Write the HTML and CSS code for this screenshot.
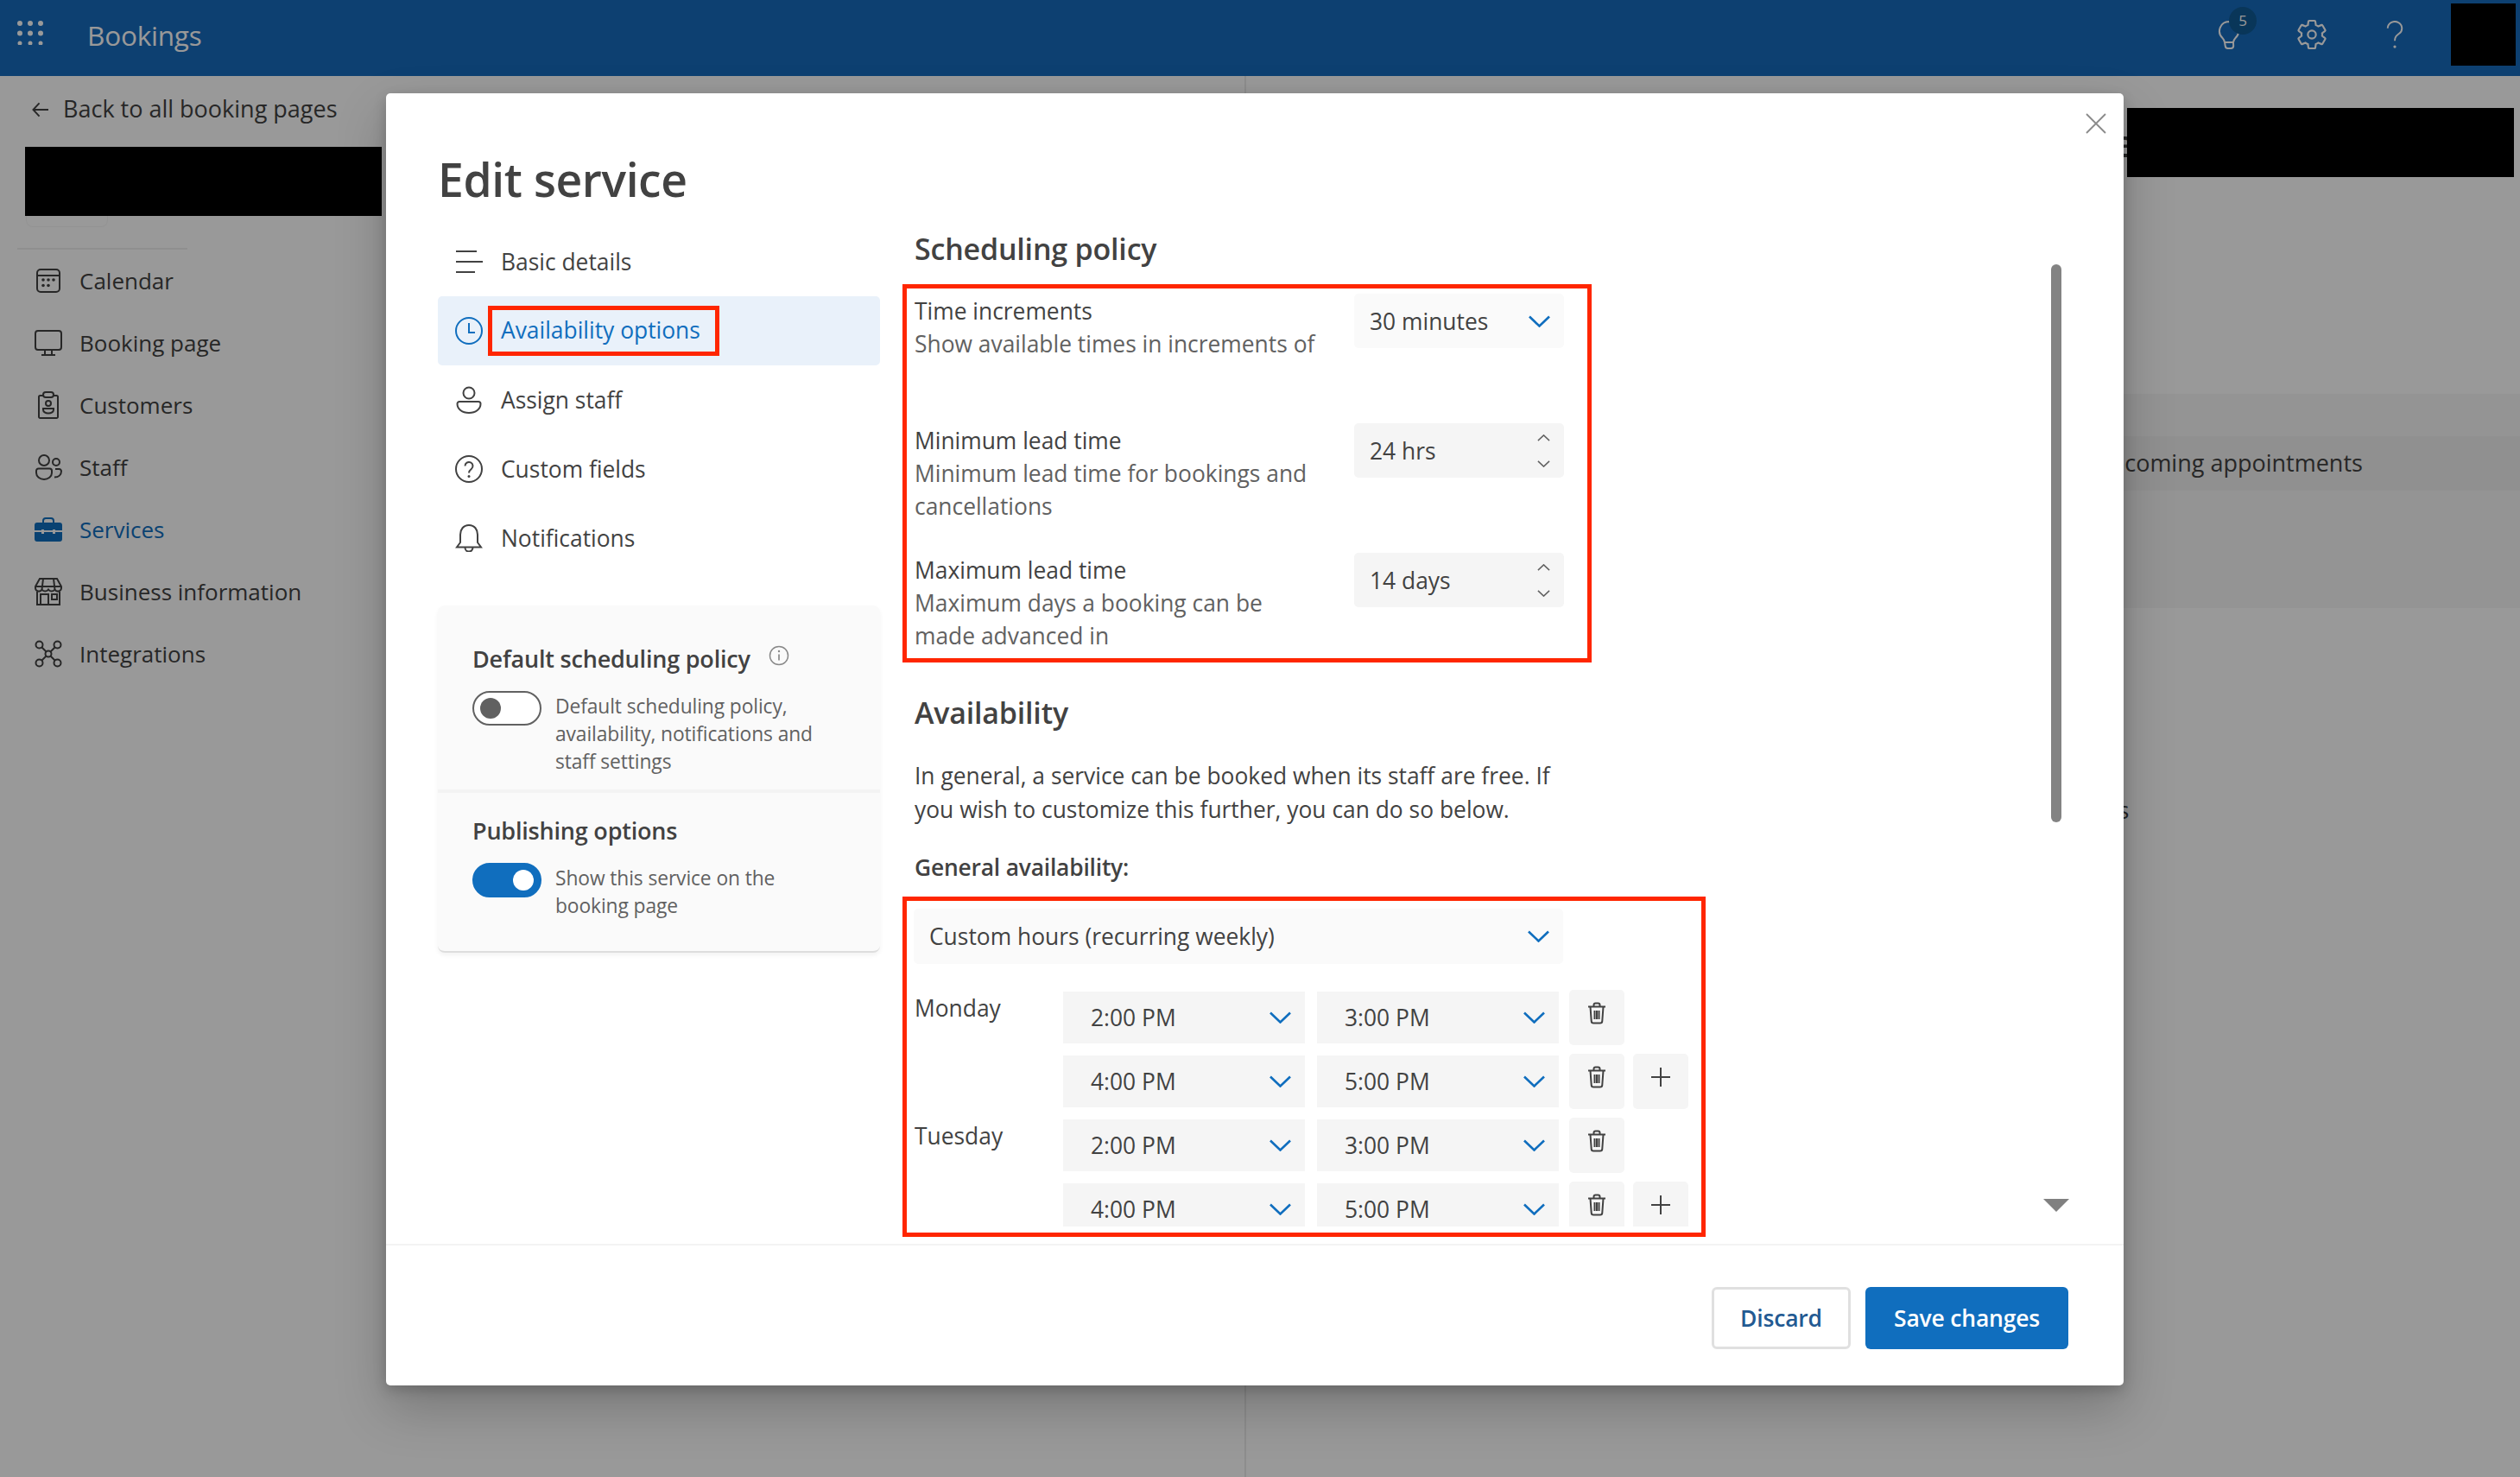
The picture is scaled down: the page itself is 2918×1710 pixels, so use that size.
FILE: index.html
```html
<!DOCTYPE html>
<html lang="en">
<head>
    <meta charset="UTF-8">
    <title>Edit service</title>
    <link rel="stylesheet" href="styles.css">
</head>
<body>
<svg class="defs" aria-hidden="true">
    <symbol id="chev" viewBox="0 0 25 14"><path d="M1 1.5 12.5 12.5 24 1.5" fill="none" stroke="currentColor" stroke-width="2.6"/></symbol>
    <symbol id="trash" viewBox="0 0 22 26"><g fill="none" stroke="currentColor" stroke-width="2"><path d="M1 5.5h20M7.5 5.5V3.5a2 2 0 0 1 2-2h3a2 2 0 0 1 2 2v2M3.5 5.5l1.2 16.5a2.5 2.5 0 0 0 2.5 2.5h7.6a2.5 2.5 0 0 0 2.5-2.5l1.2-16.5M8.5 10v10M11 10v10M13.5 10v10"/></g></symbol>
    <symbol id="plus" viewBox="0 0 22 22"><path d="M11 0v22M0 11h22" fill="none" stroke="currentColor" stroke-width="2"/></symbol>
</svg>

<!-- page behind the dialog -->
<header class="topbar">
    <svg class="waffle" viewBox="0 0 30 28"><g fill="currentColor"><circle cx="3" cy="3" r="3"/><circle cx="15" cy="3" r="3"/><circle cx="27" cy="3" r="3"/><circle cx="3" cy="14.500" r="3"/><circle cx="15" cy="14.500" r="3"/><circle cx="27" cy="14.500" r="3"/><circle cx="3" cy="26" r="2.500"/><circle cx="15" cy="26" r="2.500"/><circle cx="27" cy="26" r="2.500"/></g></svg>
    <span class="app-name">Bookings</span>
    <div class="top-icons">
        <div class="top-icon">
            <svg class="bulb" viewBox="0 0 26 34"><path d="M13 2a11 11 0 0 0-7.500 19c1.500 1.500 2 3 2.500 5l.8 4.500a3 3 0 0 0 3 2.500h3.400a3 3 0 0 0 3-2.500L18 26c.5-2 1-3.500 2.500-5A11 11 0 0 0 13 2ZM8 26h10" fill="none" stroke="currentColor" stroke-width="2"/></svg>
            <span class="badge">5</span>
        </div>
        <div class="top-icon">
            <svg class="gear" viewBox="0 0 24 24"><path d="M19.140 12.940c.04-.3.06-.61.06-.94 0-.32-.02-.64-.07-.94l2.030-1.580c.18-.14.23-.41.12-.61l-1.920-3.320c-.12-.22-.37-.29-.59-.22l-2.390.96c-.5-.38-1.030-.7-1.620-.94l-.36-2.540c-.04-.24-.24-.41-.48-.41h-3.840c-.24 0-.43.17-.47.41l-.36 2.540c-.59.24-1.130.57-1.620.94l-2.390-.96c-.22-.08-.47 0-.59.22L2.740 8.870c-.12.21-.08.47.12.61l2.030 1.580c-.05.3-.09.63-.09.94s.02.64.07.94l-2.030 1.580c-.18.14-.23.41-.12.61l1.920 3.320c.12.22.37.29.59.22l2.390-.96c.5.38 1.030.7 1.620.94l.36 2.540c.05.24.24.41.48.41h3.840c.24 0 .44-.17.47-.41l.36-2.540c.59-.24 1.130-.56 1.620-.94l2.390.96c.22.08.47 0 .59-.22l1.920-3.320c.12-.22.07-.47-.12-.61l-2.010-1.580Z" fill="none" stroke="currentColor" stroke-width="1.300"/><circle cx="12" cy="12" r="2.800" fill="none" stroke="currentColor" stroke-width="1.300"/></svg>
        </div>
        <div class="top-icon">
            <svg class="help" viewBox="0 0 20 34"><path d="M1.500 9a8.500 8 0 1 1 13.500 6.500c-3 2.300-5 3.800-5 8.500" fill="none" stroke="currentColor" stroke-width="2"/><circle cx="10" cy="31" r="1.700" fill="currentColor"/></svg>
        </div>
    </div>
    <div class="avatar"></div>
</header>

<div class="page">
    <aside class="sidebar">
        <div class="back-row">
            <svg class="back-arrow" viewBox="0 0 20 18"><path d="M9 1 1.500 9 9 17M2 9h18" fill="none" stroke="currentColor" stroke-width="2"/></svg>
            <span>Back to all booking pages</span>
        </div>
        <div class="redact redact-left"></div>
        <div class="page-btn"></div>
        <div class="side-line"></div>
        <nav class="side-nav">
            <a class="side-item">
                <svg viewBox="0 0 32 32"><g fill="none" stroke="currentColor" stroke-width="2"><rect x="3" y="3" width="26" height="26" rx="4"/><path d="M3 10h26"/></g><g fill="currentColor"><circle cx="10" cy="15" r="1.800"/><circle cx="16" cy="15" r="1.800"/><circle cx="22" cy="15" r="1.800"/><circle cx="10" cy="21.500" r="1.800"/><circle cx="16" cy="21.500" r="1.800"/></g></svg>
                <span>Calendar</span>
            </a>
            <a class="side-item">
                <svg viewBox="0 0 32 32"><g fill="none" stroke="currentColor" stroke-width="2"><rect x="1" y="2" width="30" height="22" rx="3"/><path d="M12 24v5M20 24v5M8 30h16"/></g></svg>
                <span>Booking page</span>
            </a>
            <a class="side-item">
                <svg viewBox="0 0 32 32"><g fill="none" stroke="currentColor" stroke-width="2"><path d="M10 5H6.500A1.500 1.500 0 0 0 5 6.500v23A1.500 1.500 0 0 0 6.500 31h19a1.500 1.500 0 0 0 1.500-1.500v-23A1.500 1.500 0 0 0 25.500 5H22"/><rect x="10" y="1" width="12" height="6" rx="3"/><circle cx="16" cy="14" r="3"/><path d="M10 20h12v1.500a6 4 0 0 1-12 0Z"/></g></svg>
                <span>Customers</span>
            </a>
            <a class="side-item">
                <svg viewBox="0 0 32 32"><g fill="none" stroke="currentColor" stroke-width="2"><circle cx="11" cy="8" r="6"/><circle cx="25" cy="10" r="4"/><path d="M2 20a2.500 2.500 0 0 1 2.500-2.500h13a2.500 2.500 0 0 1 2.500 2.500v2.500c0 4-4 7.500-9 7.500s-9-3.500-9-7.500Z"/><path d="M24 18h4.500a2.500 2.500 0 0 1 2.500 2.500c0 4-3 7-8 7"/></g></svg>
                <span>Staff</span>
            </a>
            <a class="side-item side-active">
                <svg viewBox="0 0 32 28"><path d="M10 7V4a3 3 0 0 1 3-3h6a3 3 0 0 1 3 3v3" fill="none" stroke="currentColor" stroke-width="2"/><path d="M3 6h26a3 3 0 0 1 3 3v6H24v-1h-3v1H11v-1H8v1H0V9a3 3 0 0 1 3-3ZM0 17h8v2h3v-2h10v2h3v-2h8v8a3 3 0 0 1-3 3H3a3 3 0 0 1-3-3Z" fill="currentColor"/></svg>
                <span>Services</span>
            </a>
            <a class="side-item">
                <svg viewBox="0 0 32 32"><g fill="none" stroke="currentColor" stroke-width="2"><path d="M6 1h20l5 9v2a4 4 0 0 1-7.500 1.500 4.500 4.500 0 0 1-7.500 0 4.500 4.500 0 0 1-7.500 0A4 4 0 0 1 1 12v-2ZM1 10h30M10 1 8.500 13.500M22 1l1.500 12.500"/><path d="M3 16v15h26V16M7 31V19h9v12M20 19h6v6h-6Z"/></g></svg>
                <span>Business information</span>
            </a>
            <a class="side-item">
                <svg viewBox="0 0 32 32"><g fill="none" stroke="currentColor" stroke-width="2"><circle cx="5.500" cy="5.500" r="4"/><circle cx="26.500" cy="5.500" r="4"/><circle cx="5.500" cy="26.500" r="4"/><circle cx="26.500" cy="26.500" r="4"/><circle cx="16" cy="16" r="3.500"/><path d="m8.500 8.500 5 5M23.500 8.500l-5 5M8.500 23.500l5-5M23.500 23.500l-5-5"/></g></svg>
                <span>Integrations</span>
            </a>
        </nav>
    </aside>
    <main class="center-pane"></main>
    <section class="right-pane">
        <div class="right-title">e</div>
        <div class="redact redact-right"></div>
        <div class="band">
            <div class="band-row">Upcoming appointments</div>
        </div>
        <div class="right-note">Services</div>
    </section>
</div>

<div class="backdrop"></div>

<!-- dialog -->
<div class="modal">
    <svg class="modal-close" viewBox="0 0 24 24"><path d="M1 1l22 22M23 1 1 23" fill="none" stroke="currentColor" stroke-width="1.800"/></svg>
    <div class="scroll-thumb"></div>
    <div class="scroll-down"></div>

    <div class="modal-body">
        <div class="left-col">
            <h1 class="modal-title">Edit service</h1>
            <ul class="menu">
                <li class="menu-item">
                    <svg viewBox="0 0 32 32"><path d="M1 4h24M1 16h32M1 28h22" fill="none" stroke="currentColor" stroke-width="2"/></svg>
                    <span>Basic details</span>
                </li>
                <li class="menu-item menu-active">
                    <svg viewBox="0 0 32 32"><circle cx="16" cy="16" r="15" fill="none" stroke="currentColor" stroke-width="2"/><path d="M16 7v11h7" fill="none" stroke="currentColor" stroke-width="2"/></svg>
                    <span class="menu-mark">Availability options</span>
                </li>
                <li class="menu-item">
                    <svg viewBox="0 0 32 32"><g fill="none" stroke="currentColor" stroke-width="2"><circle cx="16" cy="8" r="6.500"/><path d="M5 18h22a2.500 2.500 0 0 1 2.500 2.500c0 6-5.500 10.500-13.500 10.500S2.500 26.500 2.500 20.500A2.500 2.500 0 0 1 5 18Z"/></g></svg>
                    <span>Assign staff</span>
                </li>
                <li class="menu-item">
                    <svg viewBox="0 0 32 32"><circle cx="16" cy="16" r="15" fill="none" stroke="currentColor" stroke-width="2"/><path d="M11.500 12.500a4.500 4.500 0 1 1 7.300 3.500c-1.800 1.400-2.800 2.300-2.800 4.500" fill="none" stroke="currentColor" stroke-width="2"/><circle cx="16" cy="24.500" r="1.500" fill="currentColor"/></svg>
                    <span>Custom fields</span>
                </li>
                <li class="menu-item">
                    <svg viewBox="0 0 32 32"><path d="M16 1C9.500 1 6 6 6 12v9l-4 5.500h28L26 21v-9C26 6 22.500 1 16 1ZM11.500 27a4.500 4.500 0 0 0 9 0" fill="none" stroke="currentColor" stroke-width="2"/></svg>
                    <span>Notifications</span>
                </li>
            </ul>

            <div class="side-card">
                <div class="card-part card-first">
                    <h3 class="card-head">Default scheduling policy
                        <svg class="info" viewBox="0 0 24 24"><circle cx="12" cy="12" r="10.500" fill="none" stroke="currentColor" stroke-width="1.500"/><path d="M12 10.500v7" stroke="currentColor" stroke-width="1.700"/><circle cx="12" cy="7" r="1.200" fill="currentColor"/></svg>
                    </h3>
                    <div class="toggle-row">
                        <div class="toggle"><div class="knob"></div></div>
                        <p class="toggle-text">Default scheduling policy, availability, notifications and staff settings</p>
                    </div>
                </div>
                <div class="card-part">
                    <h3 class="card-head">Publishing options</h3>
                    <div class="toggle-row">
                        <div class="toggle toggle-on"><div class="knob"></div></div>
                        <p class="toggle-text">Show this service on the booking page</p>
                    </div>
                </div>
            </div>
        </div>

        <div class="right-col">
            <h2 class="section-head">Scheduling policy</h2>
            <div class="mark mark-policy">
                <div class="policy-row">
                    <div class="policy-text">
                        <div class="policy-label">Time increments</div>
                        <div class="policy-sub">Show available times in increments of</div>
                    </div>
                    <div class="field field-light">
                        <span>30 minutes</span>
                        <svg class="chev"><use href="#chev"/></svg>
                    </div>
                </div>
                <div class="policy-row">
                    <div class="policy-text">
                        <div class="policy-label">Minimum lead time</div>
                        <div class="policy-sub">Minimum lead time for bookings and cancellations</div>
                    </div>
                    <div class="field">
                        <span>24 hrs</span>
                        <div class="spin">
                            <svg class="spin-up"><use href="#chev"/></svg>
                            <svg><use href="#chev"/></svg>
                        </div>
                    </div>
                </div>
                <div class="policy-row policy-last">
                    <div class="policy-text">
                        <div class="policy-label">Maximum lead time</div>
                        <div class="policy-sub">Maximum days a booking can be made advanced in</div>
                    </div>
                    <div class="field">
                        <span>14 days</span>
                        <div class="spin">
                            <svg class="spin-up"><use href="#chev"/></svg>
                            <svg><use href="#chev"/></svg>
                        </div>
                    </div>
                </div>
            </div>

            <h2 class="section-head head-avail">Availability</h2>
            <p class="avail-text">In general, a service can be booked when its staff are free. If you wish to customize this further, you can do so below.</p>
            <div class="general-label">General availability:</div>

            <div class="mark mark-hours">
                <div class="hours-clip">
                    <div class="field field-light field-wide">
                        <span>Custom hours (recurring weekly)</span>
                        <svg class="chev"><use href="#chev"/></svg>
                    </div>
                    <div class="time-rows">
                        <div class="time-row">
                            <div class="day">Monday</div>
                            <div class="time"><span>2:00 PM</span><svg class="chev"><use href="#chev"/></svg></div>
                            <div class="time"><span>3:00 PM</span><svg class="chev"><use href="#chev"/></svg></div>
                            <div class="sq-btn"><svg class="ic-trash"><use href="#trash"/></svg></div>
                        </div>
                        <div class="time-row">
                            <div class="day"></div>
                            <div class="time"><span>4:00 PM</span><svg class="chev"><use href="#chev"/></svg></div>
                            <div class="time"><span>5:00 PM</span><svg class="chev"><use href="#chev"/></svg></div>
                            <div class="sq-btn"><svg class="ic-trash"><use href="#trash"/></svg></div>
                            <div class="sq-btn"><svg class="ic-plus"><use href="#plus"/></svg></div>
                        </div>
                        <div class="time-row">
                            <div class="day">Tuesday</div>
                            <div class="time"><span>2:00 PM</span><svg class="chev"><use href="#chev"/></svg></div>
                            <div class="time"><span>3:00 PM</span><svg class="chev"><use href="#chev"/></svg></div>
                            <div class="sq-btn"><svg class="ic-trash"><use href="#trash"/></svg></div>
                        </div>
                        <div class="time-row">
                            <div class="day"></div>
                            <div class="time"><span>4:00 PM</span><svg class="chev"><use href="#chev"/></svg></div>
                            <div class="time"><span>5:00 PM</span><svg class="chev"><use href="#chev"/></svg></div>
                            <div class="sq-btn"><svg class="ic-trash"><use href="#trash"/></svg></div>
                            <div class="sq-btn"><svg class="ic-plus"><use href="#plus"/></svg></div>
                        </div>
                    </div>
                </div>
            </div>
        </div>
    </div>

    <div class="modal-foot">
        <button class="btn btn-plain">Discard</button>
        <button class="btn btn-blue">Save changes</button>
    </div>
</div>
</body>
</html>
```

FILE: styles.css
```css
* {
    box-sizing: border-box;
}

html, body {
    margin: 0;
    height: 100%;
}

body {
    width: 2918px;
    height: 1710px;
    overflow: hidden;
    position: relative;
    background: #fff;
    font-family: "Open Sans", "Noto Sans", sans-serif;
    font-size: 26.400px;
    color: #424242;
}

.defs {
    display: none;
}

/* top bar */
.topbar {
    height: 88px;
    display: flex;
    align-items: center;
    padding-bottom: 8px;
    background: #176bbc;
    color: #fff;
}

.waffle {
    width: 30px;
    height: 28px;
    margin: -5px 0 0 20px;
}

.app-name {
    margin-left: 51px;
    font-size: 31.500px;
    letter-spacing: -0.2px;
}

.top-icons {
    margin-left: auto;
    display: flex;
}

.top-icon {
    width: 96px;
    height: 80px;
    display: flex;
    align-items: center;
    justify-content: center;
    position: relative;
}

.bulb {
    width: 26px;
    height: 34px;
}

.gear {
    width: 40px;
    height: 40px;
}

.help {
    width: 20px;
    height: 33px;
}

.badge {
    position: absolute;
    left: 48px;
    top: 8px;
    width: 32px;
    height: 32px;
    border-radius: 50%;
    background: #0f5a95;
    font-size: 17px;
    line-height: 31px;
    text-align: center;
}

.avatar {
    width: 75px;
    height: 72px;
    margin: 0 5px 0 17px;
    background: #000;
}

/* page behind */
.page {
    display: flex;
    height: 1622px;
}

.sidebar {
    width: 560px;
    padding-top: 20px;
    flex: none;
}

.back-row {
    display: flex;
    align-items: center;
    height: 34px;
    padding-left: 37px;
    gap: 17px;
    font-size: 27px;
}

.back-arrow {
    width: 19px;
    height: 18px;
    margin-top: 4px;
}

.redact {
    background: #000;
}

.redact-left {
    position: relative;
    z-index: 5;
    width: 413px;
    height: 80px;
    margin: 28px 0 0 29px;
}

.page-btn {
    width: 95px;
    height: 13px;
    margin-left: 30px;
    background: #ffffff;
    border: 1px solid #f5f5f5;
    border-top: none;
    border-radius: 0 0 8px 8px;
}

.side-line {
    width: 197px;
    height: 2px;
    margin: 24px 0 0 20px;
    background: #eeeeee;
}

.side-nav {
    display: flex;
    flex-direction: column;
}

.side-item {
    height: 72px;
    display: flex;
    align-items: center;
    gap: 20px;
    padding-left: 40px;
    font-size: 26px;
}

.side-item svg {
    width: 32px;
    height: 32px;
    flex: none;
}

.side-active {
    color: #106ebe;
}

.side-active svg {
    height: 28px;
}

.center-pane {
    width: 883px;
    flex: none;
    border-right: 2px solid #ececec;
}

.right-pane {
    flex: 1;
    position: relative;
    font-size: 27px;
}

.right-title {
    position: absolute;
    left: 1004px;
    top: 52px;
    font-size: 44px;
    font-weight: 600;
    line-height: 50px;
}

.redact-right {
    position: absolute;
    z-index: 5;
    left: 1020px;
    top: 37px;
    width: 448px;
    height: 80px;
}

.band {
    margin-top: 368px;
    height: 248px;
    padding-top: 49px;
    background: #f7f7f7;
}

.band-row {
    height: 63px;
    padding-left: 981px;
    line-height: 61px;
    background: #f0f0f0;
    white-space: nowrap;
}

.right-note {
    margin-top: 215px;
    padding-left: 920px;
}

.backdrop {
    position: absolute;
    inset: 0;
    background: rgba(0, 0, 0, 0.4);
}

/* dialog */
.modal {
    position: absolute;
    left: 447px;
    top: 108px;
    width: 2012px;
    height: 1496px;
    display: flex;
    flex-direction: column;
    background: #fff;
    border-radius: 5px;
    box-shadow: 0 26px 58px rgba(0, 0, 0, 0.22), 0 5px 15px rgba(0, 0, 0, 0.18);
}

.modal-close {
    position: absolute;
    left: 1968px;
    top: 23px;
    width: 24px;
    height: 24px;
    color: #8a8a8a;
}

.scroll-thumb {
    position: absolute;
    left: 1928px;
    top: 198px;
    width: 12px;
    height: 646px;
    border-radius: 6px;
    background: #838383;
}

.scroll-down {
    position: absolute;
    left: 1919px;
    top: 1280px;
    width: 0;
    height: 0;
    border-left: 15.500px solid transparent;
    border-right: 15.500px solid transparent;
    border-top: 15px solid #808080;
}

.modal-body {
    height: 1332px;
    flex: none;
    display: flex;
    overflow: hidden;
}

.left-col {
    width: 512px;
    margin-left: 60px;
    flex: none;
    padding-top: 64px;
}

.modal-title {
    margin: 0 0 19px 0;
    font-size: 53.400px;
    font-weight: 600;
    line-height: 72px;
    letter-spacing: -0.4px;
    color: #424242;
}

.menu {
    list-style: none;
    margin: 0;
    padding: 0;
}

.menu-item {
    height: 80px;
    display: flex;
    align-items: center;
    padding-left: 20px;
    gap: 21px;
    border-radius: 5px;
}

.menu-item svg {
    width: 32px;
    height: 32px;
    flex: none;
}

.menu-active {
    background: #e9f1fa;
    color: #106ebe;
}

.menu-mark {
    margin-left: -15px;
    height: 58px;
    padding: 0 17px 0 10px;
    border: 5px solid #ff2600;
    line-height: 46px;
}

.side-card {
    margin-top: 38px;
    background: #fafafa;
    border-radius: 8px;
    border-bottom: 2px solid #dddddd;
    box-shadow: 0 3px 5px rgba(0, 0, 0, 0.05);
    height: 402px;
}

.card-part {
    padding: 0 40px;
}

.card-first {
    height: 217px;
    padding-top: 44px;
    border-bottom: 4px solid #f3f3f3;
}

.card-part + .card-part {
    padding-top: 26px;
}

.card-head {
    margin: 0;
    font-size: 27px;
    font-weight: 600;
    line-height: 36px;
    display: flex;
    align-items: center;
    letter-spacing: -0.2px;
}

.info {
    width: 24px;
    height: 24px;
    margin: -8px 0 0 21px;
    color: #888888;
}

.toggle-row {
    display: flex;
    gap: 16px;
    margin-top: 19px;
}

.toggle {
    width: 80px;
    height: 40px;
    flex: none;
    display: flex;
    align-items: center;
    padding: 0 7px;
    border: 2px solid #616161;
    border-radius: 20px;
    background: #fff;
}

.knob {
    width: 24px;
    height: 24px;
    border-radius: 50%;
    background: #616161;
}

.toggle-on {
    justify-content: flex-end;
    background: #106ebe;
    border-color: #106ebe;
}

.toggle-on .knob {
    background: #fff;
}

.toggle-text {
    margin: 2px 0 0;
    width: 320px;
    font-size: 22.800px;
    line-height: 32px;
    color: #616161;
    letter-spacing: -0.1px;
}

.right-col {
    margin-left: 26px;
    width: 930px;
    flex: none;
    padding-top: 158px;
}

.section-head {
    margin: 0 0 19px 14px;
    font-size: 34px;
    font-weight: 600;
    line-height: 44px;
    letter-spacing: -0.2px;
}

.head-avail {
    margin-top: 36px;
    margin-bottom: 32px;
}

.mark {
    border: 5px solid #ff2600;
}

.mark-policy {
    width: 798px;
    height: 438px;
    padding: 6px 0 0 9px;
}

.policy-row {
    height: 150px;
    display: flex;
}

.policy-last {
    height: auto;
}

.policy-text {
    width: 509px;
    padding: 1px 42px 0 0;
    line-height: 38px;
}

.policy-sub {
    color: #616161;
}

.field {
    width: 243px;
    height: 63px;
    display: flex;
    align-items: center;
    justify-content: space-between;
    padding: 0 16px 0 18px;
    background: #f5f5f5;
    border-radius: 5px;
}

.field-light {
    background: #fafafa;
}

.field-wide {
    width: 752px;
    height: 64px;
    margin-left: 8px;
}

.chev {
    width: 25px;
    height: 14px;
    color: #106ebe;
    flex: none;
}

.spin {
    display: flex;
    flex-direction: column;
    gap: 22px;
    color: #616161;
}

.spin svg {
    display: block;
    width: 15px;
    height: 8px;
}

.spin-up {
    transform: scaleY(-1);
}

.avail-text {
    margin: 0 0 0 14px;
    width: 760px;
    line-height: 39px;
}

.general-label {
    margin: 28px 0 15px 14px;
    font-weight: 600;
    line-height: 38px;
    letter-spacing: -0.2px;
}

.mark-hours {
    height: 394px;
    padding-bottom: 7px;
}

.hours-clip {
    height: 377px;
    overflow: hidden;
    padding-top: 9px;
}

.time-rows {
    margin-top: 30px;
    padding-left: 9px;
    display: flex;
    flex-direction: column;
    gap: 10px;
}

.time-row {
    display: flex;
    align-items: center;
    height: 64px;
    flex: none;
}

.day {
    width: 172px;
    align-self: flex-start;
    margin-top: 2px;
    line-height: 38px;
}

.time {
    width: 280px;
    height: 60px;
    display: flex;
    align-items: center;
    justify-content: space-between;
    padding: 0 16px 0 32px;
    margin-right: 14px;
    background: #f5f5f5;
}

.sq-btn {
    width: 64px;
    height: 64px;
    margin-right: 10px;
    display: flex;
    justify-content: center;
    padding-top: 14px;
    background: #f5f5f5;
    border-radius: 5px;
    flex: none;
}

.time + .sq-btn {
    margin-left: -2px;
}

.ic-trash {
    width: 22px;
    height: 26px;
}

.ic-plus {
    width: 22px;
    height: 22px;
    margin-top: 2px;
}

.modal-foot {
    flex: 1;
    display: flex;
    justify-content: flex-end;
    gap: 17px;
    padding: 48px 64px 0 0;
    border-top: 2px solid #f3f3f3;
}

.btn {
    height: 72px;
    font-family: inherit;
    font-size: 26.500px;
    font-weight: 600;
    border-radius: 6px;
    letter-spacing: -0.2px;
}

.btn-plain {
    width: 161px;
    background: #fff;
    border: 3px solid #e0e0e0;
    color: #235a92;
}

.btn-blue {
    width: 235px;
    background: #106ebe;
    border: none;
    color: #fff;
}
```
